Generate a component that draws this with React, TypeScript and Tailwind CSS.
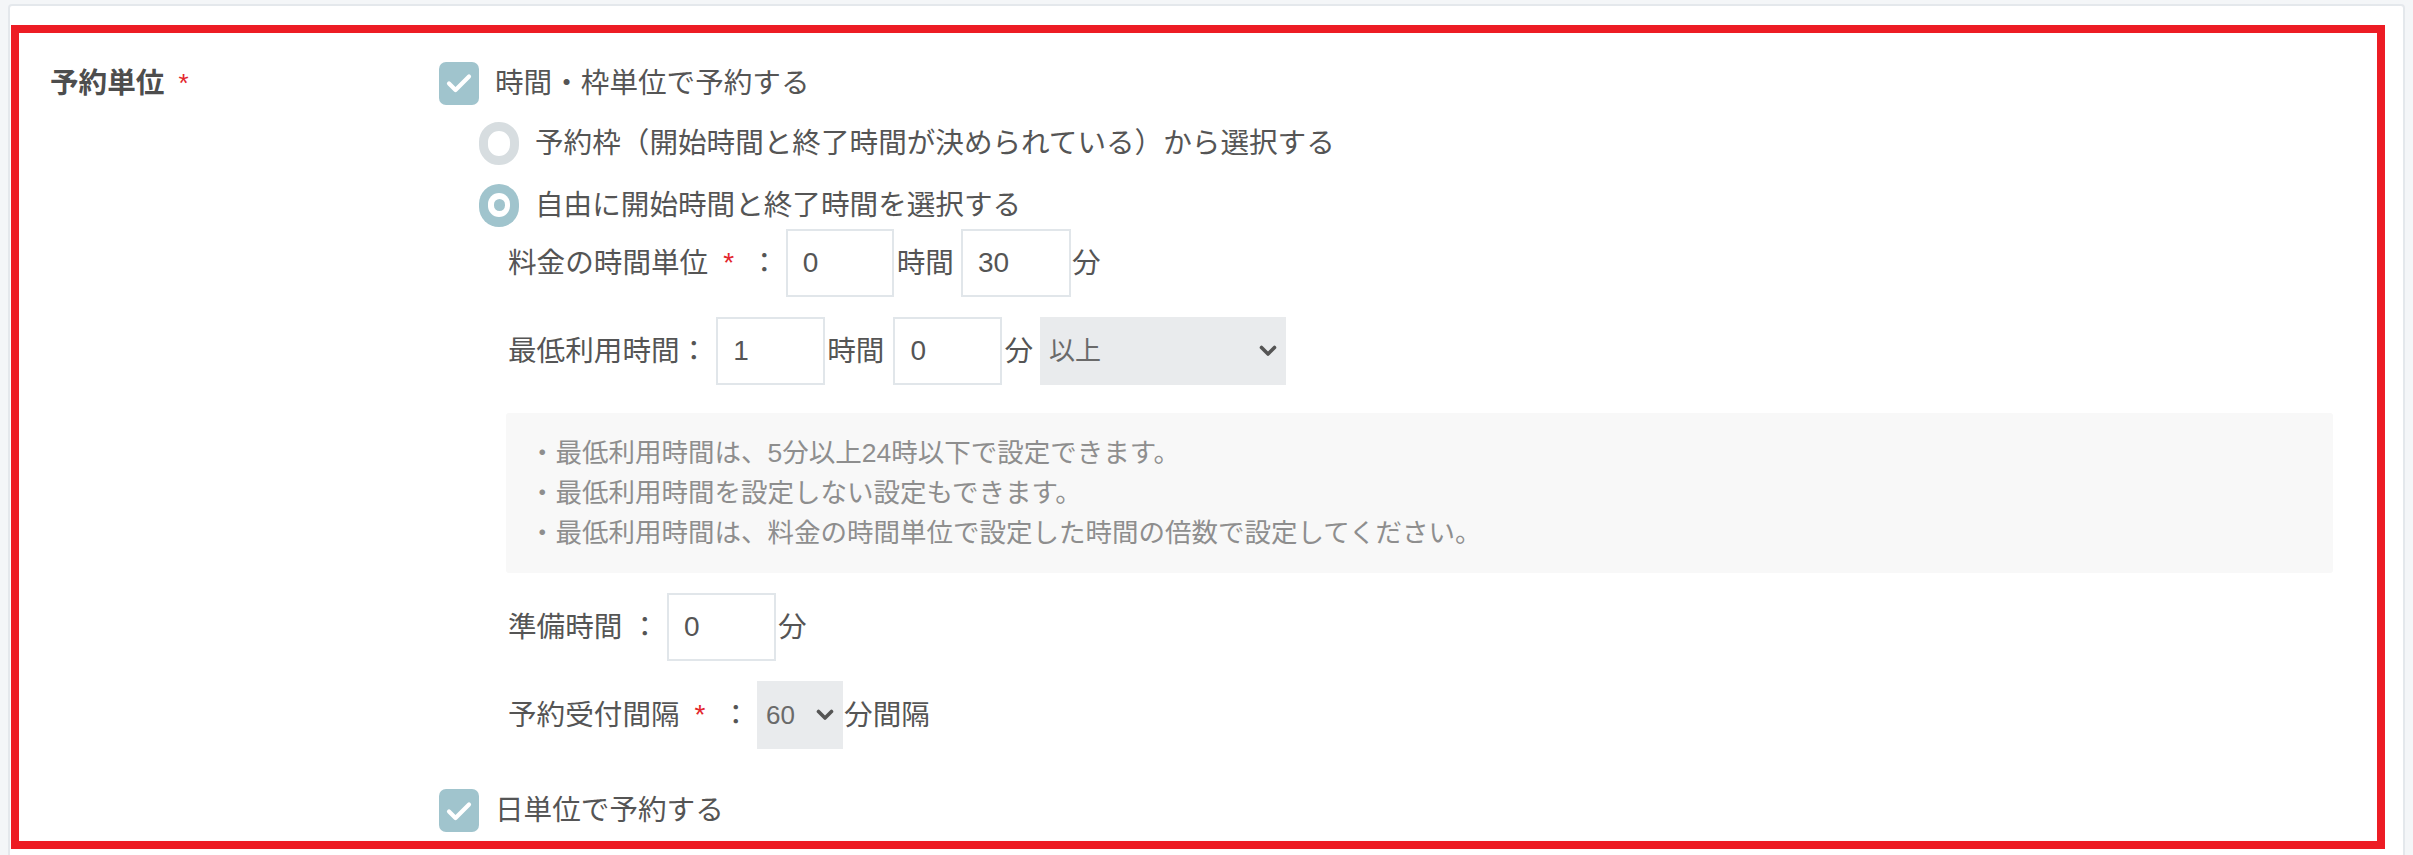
import React from 'react'

const font = { fontFamily: '"Liberation Sans", "Noto Sans CJK JP", sans-serif' }

function Checkbox() {
  return (
    <span className="flex h-[43px] w-[40px] shrink-0 items-center justify-center rounded-[7px] bg-[#a0c4cd]">
      <svg width="26" height="20" viewBox="0 0 26 20" fill="none">
        <path d="M3 10.5l6.5 6.5L23 3.5" stroke="#fff" strokeWidth="4.2" strokeLinecap="round" strokeLinejoin="round" />
      </svg>
    </span>
  )
}

function Radio({ checked }: { checked?: boolean }) {
  if (!checked) {
    return <span className="block h-[43px] w-[40px] shrink-0 rounded-full border-[9px] border-[#d7dde0] bg-white" />
  }
  return (
    <span className="flex h-[43px] w-[40px] shrink-0 items-center justify-center rounded-full bg-[#a0c4cd]">
      <span className="flex h-[24px] w-[22px] items-center justify-center rounded-full bg-white">
        <span className="block h-[12px] w-[11px] rounded-full bg-[#a0c4cd]" />
      </span>
    </span>
  )
}

function Box({ value, w = 'w-[108px]' }: { value: string; w?: string }) {
  return (
    <div className={`flex h-[68px] ${w} shrink-0 items-center border-2 border-[#e1e6ea] bg-white pl-[15px] text-[28px] text-[#555]`}>
      {value}
    </div>
  )
}

function Chevron() {
  return (
    <svg width="18" height="12" viewBox="0 0 18 12" fill="none">
      <path d="M2.5 2.5L9 9l6.5-6.5" stroke="#555" strokeWidth="3.6" strokeLinecap="round" strokeLinejoin="round" />
    </svg>
  )
}

function Select({ value, w }: { value: string; w: string }) {
  return (
    <div className={`flex h-[68px] ${w} shrink-0 items-center justify-between bg-[#e9ebed] pl-[9px] pr-[9px] text-[26px] text-[#6a6a6a]`}>
      <span>{value}</span>
      <Chevron />
    </div>
  )
}

const Req = () => <span className="ml-[15px] text-[28px] text-[#e3262d]">*</span>
const Colon = ({ ml }: { ml: string }) => <span className={ml}>：</span>

export default function App() {
  return (
    <div className="min-h-screen bg-[#f4f6f8] pt-[4px]" style={font}>
      <div className="mx-[8px] rounded-[4px] border-2 border-[#e4e8ec] bg-white pb-[40px] pl-[1px] pr-[18px] pt-[19px]">
        <div className="flex border-8 border-[#ed1c24] text-[28.6px] leading-none text-[#555]">
          <div className="w-[420px] shrink-0 pl-[31px] pt-[28px]">
            <div className="flex h-[44px] items-center font-bold text-[#4d4d4d]">
              予約単位
              <span className="ml-[14px] text-[26px] font-normal text-[#e3262d]">*</span>
            </div>
          </div>

          <div className="flex flex-1 flex-col pb-[9px] pr-[44px] pt-[28px]">
            <div className="flex h-[44px] items-center gap-[16px]">
              <Checkbox />
              <span>時間・枠単位で予約する</span>
            </div>
            <div className="ml-[40px] mt-[16px] flex h-[44px] items-center gap-[16px]">
              <Radio />
              <span>予約枠（開始時間と終了時間が決められている）から選択する</span>
            </div>
            <div className="ml-[40px] mt-[18px] flex h-[44px] items-center gap-[16px]">
              <Radio checked />
              <span>自由に開始時間と終了時間を選択する</span>
            </div>

            <div className="ml-[69px] flex flex-col">
              <div className="mt-[2px] flex h-[68px] items-center">
                <span>料金の時間単位</span>
                <Req />
                <Colon ml="ml-[16px]" />
                <div className="ml-[7px]"><Box value="0" /></div>
                <span className="ml-[3px]">時間</span>
                <div className="ml-[7px]"><Box value="30" w="w-[110px]" /></div>
                <span className="ml-[1px]">分</span>
              </div>

              <div className="mt-[20px] flex h-[68px] items-center">
                <span>最低利用時間</span>
                <Colon ml="ml-0" />
                <div className="ml-[8px]"><Box value="1" w="w-[109px]" /></div>
                <span className="ml-[2px]">時間</span>
                <div className="ml-[9px]"><Box value="0" w="w-[109px]" /></div>
                <span className="ml-[2px]">分</span>
                <div className="ml-[7px]"><Select value="以上" w="w-[246px]" /></div>
              </div>

              <div className="-ml-[2px] mt-[28px] flex h-[160px] flex-col justify-center rounded-[3px] bg-[#f8f8f8] pl-[23px] text-[26.5px] leading-[40px] text-[#8e8e8e]">
                <p>・最低利用時間は、5分以上24時以下で設定できます。</p>
                <p>・最低利用時間を設定しない設定もできます。</p>
                <p>・最低利用時間は、料金の時間単位で設定した時間の倍数で設定してください。</p>
              </div>

              <div className="mt-[20px] flex h-[68px] items-center">
                <span>準備時間</span>
                <Colon ml="ml-[8px]" />
                <div className="ml-[8px]"><Box value="0" w="w-[109px]" /></div>
                <span className="ml-[2px]">分</span>
              </div>

              <div className="mt-[20px] flex h-[68px] items-center">
                <span>予約受付間隔</span>
                <Req />
                <Colon ml="ml-[16px]" />
                <div className="ml-[7px]"><Select value="60" w="w-[86px]" /></div>
                <span className="ml-[1px]">分間隔</span>
              </div>
            </div>

            <div className="mt-[40px] flex h-[43px] items-center gap-[16px]">
              <Checkbox />
              <span>日単位で予約する</span>
            </div>
          </div>
        </div>
      </div>
    </div>
  )
}
